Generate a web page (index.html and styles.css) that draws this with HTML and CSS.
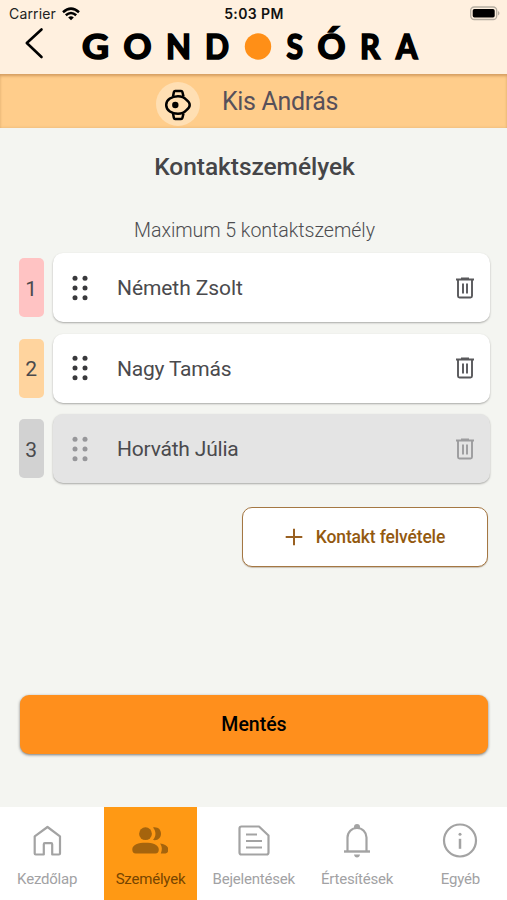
FILE: index.html
```html
<!DOCTYPE html>
<html lang="hu">
<head>
<meta charset="utf-8">
<title>Gondosóra</title>
<link rel="stylesheet" href="styles.css">
</head>
<body>
<div class="app">
  <header class="header">
    <div class="status">
      <div class="carrier"><span>Carrier</span>
        <svg width="18" height="14" viewBox="0 0 18 14"><g fill="none" stroke="#000" stroke-width="2.5"><path d="M1 5.2Q9-2 17 5.2"/><path d="M3.8 8.3Q9 3.6 14.2 8.3"/></g><path d="M6.2 10.4Q9 8.3 11.8 10.4L9 13.3Z"/></svg>
      </div>
      <span class="time">5:03 PM</span>
      <svg class="battery" width="32" height="15" viewBox="0 0 32 15"><rect x="1.700" y="1" width="26" height="12.500" rx="3.500" fill="none" stroke="#b5ada1" stroke-width="1.300"/><rect x="3.700" y="3" width="22" height="8.500" rx="1.700"/><path d="M29 5q3 2.200 0 4.600z" fill="#b5ada1"/></svg>
    </div>
    <div class="brand">
      <svg class="back" width="20" height="32" viewBox="0 0 20 32"><path d="M17.500 2.500 2.800 16 17.500 30" fill="none" stroke="#000" stroke-width="2.600" stroke-linecap="round" stroke-linejoin="round"/></svg>
      <svg class="logo" width="340" height="40" viewBox="0 0 340 40">
        <text x="2" y="34.600" textLength="27" lengthAdjust="spacingAndGlyphs">G</text>
        <text x="43.500" y="34.600" textLength="28" lengthAdjust="spacingAndGlyphs">O</text>
        <text x="86" y="34.600" textLength="25" lengthAdjust="spacingAndGlyphs">N</text>
        <text x="125" y="34.600" textLength="24" lengthAdjust="spacingAndGlyphs">D</text>
        <circle cx="178" cy="22.500" r="13.200" fill="#ff8f17"/>
        <text x="206.500" y="34.600" textLength="16.500" lengthAdjust="spacingAndGlyphs">S</text>
        <text x="237.500" y="34.600" textLength="28" lengthAdjust="spacingAndGlyphs">Ó</text>
        <text x="280" y="34.600" textLength="20" lengthAdjust="spacingAndGlyphs">R</text>
        <text x="316" y="34.600" textLength="21.500" lengthAdjust="spacingAndGlyphs">A</text>
      </svg>
    </div>
  </header>
  <div class="person">
    <span class="avatar"><svg width="28" height="34" viewBox="0 0 28 34"><g fill="none" stroke="#000" stroke-width="2.500" stroke-linejoin="round"><path d="M9 9.500 9.900 5q.3-1 1.200-1h6q1 0 1.300 1l1.100 4.500"/><path d="M9 26.500 9.900 31q.3 1 1.200 1h6q1 0 1.300-1l1.100-4.500"/><path d="M2.200 18C2.200 12.500 8 9.300 14 9.300c3.600 0 6.400 1.200 8.300 3.500q3.400 2.400 3.400 5.200t-3.400 5.200c-1.900 2.300-4.700 3.500-8.300 3.500C8 26.700 2.200 23.500 2.200 18Z"/></g><circle cx="11.300" cy="18" r="3.200"/></svg></span>
    <span class="person-name">Kis András</span>
  </div>
  <main class="main">
    <h1 class="title">Kontaktszemélyek</h1>
    <p class="hint">Maximum 5 kontaktszemély</p>
    <ul class="contacts">
      <li class="row">
        <span class="rank red">1</span>
        <div class="card">
          <svg class="grip" width="16" height="26" viewBox="0 0 16 26"><use href="#dots"/></svg>
          <span class="name n1">Németh Zsolt</span>
          <svg class="trash" width="20" height="24" viewBox="0 0 20 24"><use href="#bin"/></svg>
        </div>
      </li>
      <li class="row">
        <span class="rank amber">2</span>
        <div class="card">
          <svg class="grip" width="16" height="26" viewBox="0 0 16 26"><use href="#dots"/></svg>
          <span class="name">Nagy Tamás</span>
          <svg class="trash" width="20" height="24" viewBox="0 0 20 24"><use href="#bin"/></svg>
        </div>
      </li>
      <li class="row">
        <span class="rank grey">3</span>
        <div class="card disabled">
          <svg class="grip" width="16" height="26" viewBox="0 0 16 26"><use href="#dots"/></svg>
          <span class="name">Horváth Júlia</span>
          <svg class="trash" width="20" height="24" viewBox="0 0 20 24"><use href="#bin"/></svg>
        </div>
      </li>
    </ul>
    <button class="add"><svg width="18" height="18" viewBox="0 0 18 18"><path d="M9 .7v16.600M.7 9h16.600" fill="none" stroke="#996021" stroke-width="2"/></svg><span class="add-label">Kontakt felvétele</span></button>
    <button class="save"><span class="save-label">Mentés</span></button>
  </main>
  <nav class="nav">
    <a class="tab"><svg width="36" height="36" viewBox="0 0 36 36"><path d="M5.700 13.300 18.500 4l12.500 9.300V30.500q0 1-1 1h-6.800v-10.300q0-1-1-1h-6.400q-1 0-1 1v10.300H6.700q-1 0-1-1Z" fill="none" stroke="#a3a3a3" stroke-width="2.200" stroke-linejoin="round"/></svg><span class="label">Kezdőlap</span></a>
    <a class="tab active"><svg width="36" height="36" viewBox="0 0 36 36" fill="#a5640d"><circle cx="13.500" cy="10.700" r="6.400"/><path d="M.3 26.500C.3 21.500 6.500 19.700 13.500 19.700s13.300 1.800 13.300 6.800q0 4-3.500 4H3.800q-3.500 0-3.500-4Z"/><path d="M21 4.500c5-.8 8 2.300 8 6.300s-3 7.200-8 6.300c3.300-4 3.300-8.600 0-12.600Z"/><path d="M28 20.500c5 .6 8.300 2.700 8.300 6 0 3-1.500 4-4 4h-3.500c1.500-3.500 1.500-7-.8-10Z"/></svg><span class="label">Személyek</span></a>
    <a class="tab"><svg width="36" height="36" viewBox="0 0 36 36" fill="none" stroke="#a3a3a3" stroke-width="2.200"><path d="M5.500 3.500h17.500L32.500 12.500V29.500q0 2-2 2H5.500q-2 0-2-2V5.500q0-2 2-2Z" stroke-linejoin="round"/><path d="M10 11.500h11M10 18h16M10 24.500h16"/></svg><span class="label">Bejelentések</span></a>
    <a class="tab"><svg width="36" height="36" viewBox="0 0 36 36"><path d="M8.500 28V14.500a9.500 9.500 0 0 1 19 0V28" fill="none" stroke="#a3a3a3" stroke-width="2.200"/><path d="M5 28.500h26" stroke="#a3a3a3" stroke-width="2.400"/><path d="M15 4q0-3 3-3t3 3v2h-6Z" fill="#a3a3a3"/><path d="M15 31.500h6q-.5 3-3 3t-3-3Z" fill="#a3a3a3"/></svg><span class="label">Értesítések</span></a>
    <a class="tab"><svg width="36" height="36" viewBox="0 0 36 36"><circle cx="18" cy="17.500" r="16" fill="none" stroke="#a3a3a3" stroke-width="2.200"/><path d="M18 15.800v10" stroke="#a3a3a3" stroke-width="2.500"/><circle cx="18" cy="11.300" r="1.500" fill="#a3a3a3"/></svg><span class="label">Egyéb</span></a>
  </nav>
</div>
<svg class="defs" width="0" height="0">
  <defs>
    <g id="dots"><circle cx="3" cy="3.300" r="2.500"/><circle cx="13" cy="3.300" r="2.500"/><circle cx="3" cy="13" r="2.500"/><circle cx="13" cy="13" r="2.500"/><circle cx="3" cy="22.700" r="2.500"/><circle cx="13" cy="22.700" r="2.500"/></g>
    <g id="bin" fill="none" stroke="currentColor" stroke-width="1.900"><path d="M1 3.500h18M6 2.500h8"/><path d="M3 3.500v16.500q0 1.500 1.500 1.500h11q1.500 0 1.500-1.500v-16.500M8 7.500v10M12 7.500v10"/></g>
  </defs>
</svg>
</body>
</html>
```
FILE: styles.css
```css
* { box-sizing: border-box; }
body { margin: 0; font-family: Roboto, sans-serif; color: #4a4a4d; background: #f4f5f1; }
svg { display: block; flex: none; }
.defs { position: absolute; }
.app { width: 507px; height: 900px; display: flex; flex-direction: column; overflow: hidden; }
.header { height: 74px; background: #fff0df; }
.status { height: 26px; padding: 0 6px 0 9px; display: grid; grid-template-columns: 1fr auto 1fr; align-items: center; font-family: Inter, sans-serif; }
.carrier { display: flex; align-items: center; gap: 6px; font-size: 14px; letter-spacing: .15px; color: #222; padding-top: 1px; }
.time { font-size: 14px; font-weight: 600; letter-spacing: .4px; color: #111; padding-top: 1px; margin-left: -2px; }
.battery { justify-self: end; }
.brand { display: flex; padding-left: 24px; }
.back { margin-top: 1px; }
.logo { margin-left: 36px; margin-top: -2px; overflow: visible; font: 700 33.500px Lato, sans-serif; fill: #000; stroke: #000; stroke-width: 1.700px; }
.logo circle { stroke: none; }
.person { height: 54px; background: #ffcd8b; display: flex; align-items: center; padding: 6px 0 0 156px; box-shadow: inset 0 3px 3px -1px #d69e62, inset 0 0 3px #e3b578; }
.avatar { width: 44px; height: 44px; border-radius: 50%; background: #ffdfb3; display: grid; place-items: center; }
.person-name { font-size: 25px; letter-spacing: -.35px; margin: -5px 0 0 22px; color: #57505a; white-space: nowrap; }
.main { flex: 1; padding: 0 17px 0 19px; display: flex; flex-direction: column; background: #f4f5f1; }
.title { margin: 24px 0 0; font-size: 24.500px; line-height: 30px; letter-spacing: -.05px; font-weight: 500; text-align: center; color: #454548; }
.hint { margin: 37px 0 0; font-size: 19.600px; line-height: 24px; letter-spacing: -.05px; font-weight: 300; text-align: center; color: #4d4d50; }
.contacts { list-style: none; margin: 10px 0 0; padding: 0; display: flex; flex-direction: column; gap: 11.700px; }
.row { display: flex; align-items: center; gap: 9.500px; height: 69px; }
.rank { width: 24.500px; height: 59px; border-radius: 5px; display: grid; place-items: center; font-size: 21px; padding-top: 2px; }
.red { background: #ffc3c3; }
.amber { background: #ffd49e; }
.grey { background: #d2d2d2; }
.card { flex: 1; height: 69px; border-radius: 10px; background: #fff; display: flex; align-items: center; padding: 0 15px 0 19px; box-shadow: 0 1px 2px #a9a9a6; }
.grip { fill: #39393c; }
.name { flex: 1; margin-left: 29px; padding-top: 1px; font-size: 21px; letter-spacing: -.2px; }
.n1 { letter-spacing: -.08px; }
.trash { color: #58585b; }
.disabled { background: #e4e4e4; }
.disabled .grip { fill: #97979a; }
.disabled .trash { color: #9c9c9e; }
button { font-family: inherit; cursor: pointer; padding: 0; }
.add { align-self: flex-end; margin: 23.500px 2px 0 0; width: 246px; height: 60px; border: 1.500px solid #a47743; border-radius: 10px; background: #fff; display: flex; align-items: center; justify-content: center; gap: 13px; box-shadow: 0 1px 1px #c9c0b2; }
.add-label { font-size: 17.500px; letter-spacing: -.15px; font-weight: 500; color: #93590f; }
.save { margin: 128px 2px 0 1px; height: 59px; border: 0; border-radius: 9px; background: #ff8f1c; box-shadow: 0 1px 3px #777; }
.save-label { font-size: 19.500px; font-weight: 500; color: #000; }
.nav { height: 93px; background: #fff; display: grid; grid-template-columns: repeat(5, 93px); gap: 10.300px; padding-left: .7px; }
.tab { display: flex; flex-direction: column; align-items: center; padding-top: 16px; gap: 10px; }
.label { font-size: 15px; letter-spacing: -.2px; line-height: 20px; color: #a2a2a4; white-space: nowrap; }
.active { background: #ff9914; }
.active .label { color: #774500; }
```
